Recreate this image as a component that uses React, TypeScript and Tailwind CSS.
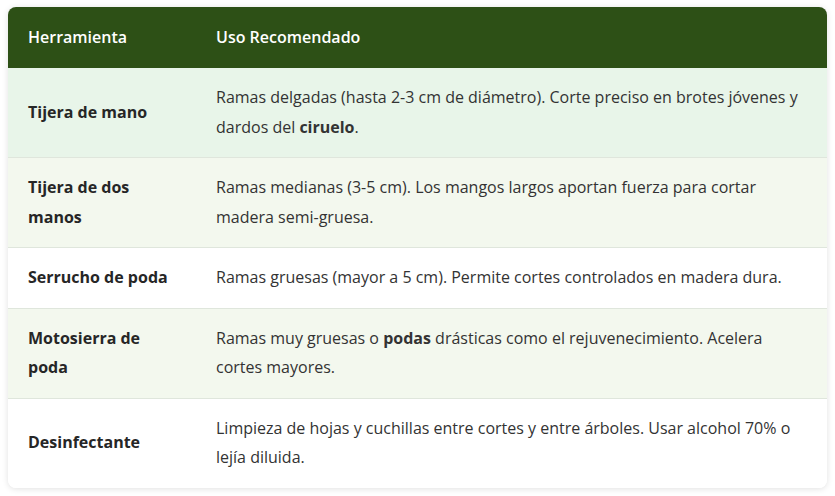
import React from 'react';

const rows: { tool: React.ReactNode; use: React.ReactNode; bg: string }[] = [
  {
    tool: 'Tijera de mano',
    use: (
      <>
        Ramas delgadas (hasta 2-3 cm de diámetro). Corte preciso en brotes jóvenes y dardos del{' '}
        <strong className="font-bold">ciruelo</strong>.
      </>
    ),
    bg: 'bg-[#e8f5e9]',
  },
  {
    tool: 'Tijera de dos manos',
    use: 'Ramas medianas (3-5 cm). Los mangos largos aportan fuerza para cortar madera semi-gruesa.',
    bg: 'bg-[#f3f8ee]',
  },
  {
    tool: 'Serrucho de poda',
    use: 'Ramas gruesas (mayor a 5 cm). Permite cortes controlados en madera dura.',
    bg: 'bg-white',
  },
  {
    tool: 'Motosierra de poda',
    use: (
      <>
        Ramas muy gruesas o <strong className="font-bold">podas</strong> drásticas como el rejuvenecimiento. Acelera
        cortes mayores.
      </>
    ),
    bg: 'bg-[#f3f8ee]',
  },
  {
    tool: 'Desinfectante',
    use: 'Limpieza de hojas y cuchillas entre cortes y entre árboles. Usar alcohol 70% o lejía diluida.',
    bg: 'bg-white',
  },
];

export default function App() {
  return (
    <div className="min-h-[496px] bg-white px-2 pt-[7px] font-['Open_Sans',sans-serif] text-[16px] text-[#333333]">
      <div className="overflow-hidden rounded-lg bg-white shadow-[0_1px_6px_rgba(0,0,0,0.12)]">
        <table className="w-full table-fixed border-collapse">
          <colgroup>
            <col className="w-[188px]" />
            <col />
          </colgroup>
          <thead>
            <tr className="bg-[#2d5016] text-left text-white">
              <th className="px-5 py-[15px] font-semibold leading-[31px]">Herramienta</th>
              <th className="px-5 py-[15px] font-semibold leading-[31px]">Uso Recomendado</th>
            </tr>
          </thead>
          <tbody>
            {rows.map((r, i) => (
              <tr key={i} className={`${r.bg} border-b border-[#dfe6dc] last:border-b-0`}>
                <td className="px-5 py-[15px] align-middle font-bold leading-[29.5px] text-[#262626]">{r.tool}</td>
                <td className="px-5 py-[15px] align-middle leading-[29.5px]">{r.use}</td>
              </tr>
            ))}
          </tbody>
        </table>
      </div>
    </div>
  );
}
